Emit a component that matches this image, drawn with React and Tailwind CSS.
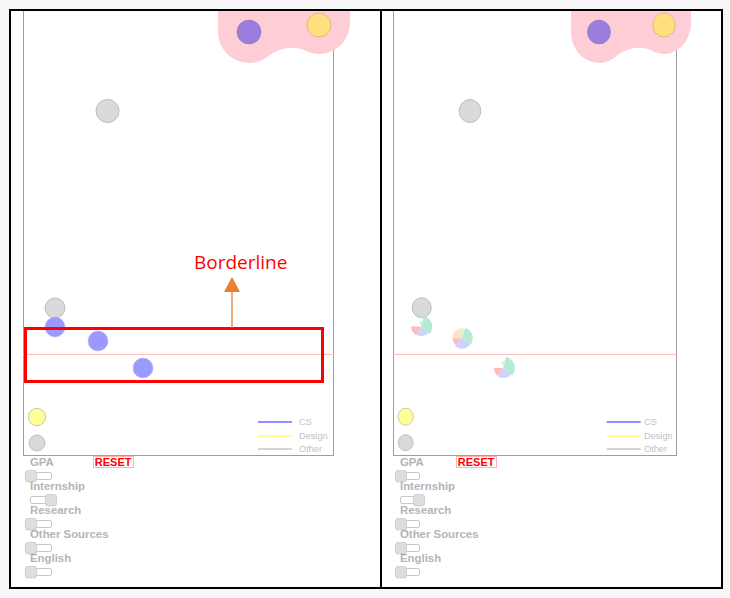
import React from "react";

const wedge = (cx, cy, r, a0, a1) => {
  const rad = (a) => (a * Math.PI) / 180;
  const x0 = cx + r * Math.cos(rad(a0));
  const y0 = cy + r * Math.sin(rad(a0));
  const x1 = cx + r * Math.cos(rad(a1));
  const y1 = cy + r * Math.sin(rad(a1));
  const large = a1 - a0 > 180 ? 1 : 0;
  return `M ${cx} ${cy} L ${x0} ${y0} A ${r} ${r} 0 ${large} 1 ${x1} ${y1} Z`;
};

const WEDGE_COLORS = {
  red: "#ffbcbc",
  blue: "#cdd3ff",
  green: "#b6ead2",
  peach: "#fde0c6",
  lime: "#e6f1cb",
};

const pies = [
  {
    cx: 28.3,
    cy: 315.7,
    parts: [
      ["lime", -112, -76, 5.5],
      ["green", -76, 42, 11],
      ["blue", 42, 122, 9.5],
      ["red", 122, 182, 10],
    ],
  },
  {
    cx: 68.7,
    cy: 327.3,
    parts: [
      ["peach", 180, 245, 9.5],
      ["lime", 245, 290, 10],
      ["green", -70, 32, 11],
      ["blue", 32, 130, 10.5],
      ["red", 130, 180, 9],
    ],
  },
  {
    cx: 110.3,
    cy: 357,
    parts: [
      ["lime", -110, -76, 7],
      ["green", -76, 40, 11.5],
      ["blue", 40, 125, 10],
      ["red", 125, 180, 9.5],
    ],
  },
];

function Legend({ x, tx }) {
  const rows = [
    ["#6b6bff", "CS", 411],
    ["#ffff70", "Design", 425],
    ["#c8c8c8", "Other", 438],
  ];
  return (
    <g>
      {rows.map(([c, label, y]) => (
        <g key={label}>
          <line x1={x} x2={x + 34} y1={y} y2={y} stroke={c} strokeWidth="1.5" />
          <text
            x={tx}
            y={y + 3.3}
            fontSize="9.2"
            fill="#c2c2c2"
            fontFamily="'Liberation Sans', Arial, sans-serif"
          >
            {label}
          </text>
        </g>
      ))}
    </g>
  );
}

function LeftPlot() {
  return (
    <svg width="311" height="446" className="absolute left-[-1px] top-0 overflow-visible">
      <path
        d="M 195 21 A 31 31 0 0 0 245.9 44.7 C 258 36 272 34 285.4 41.1 A 31 31 0 0 0 327 12 L 327 -40 L 195 -40 Z"
        fill="#ffcdd6"
      />
      <circle cx="226" cy="21" r="12" fill="#9b7de0" stroke="#8a7ab8" strokeWidth="0.6" />
      <circle cx="296" cy="14" r="12" fill="#ffe07c" stroke="#bba77a" strokeWidth="0.6" />
      <circle cx="84.5" cy="100" r="11.5" fill="#dadada" stroke="#bdbdbd" strokeWidth="1" />
      <line x1="0" x2="311" y1="343.5" y2="343.5" stroke="#ffbcbc" strokeWidth="1" />
      <circle cx="32" cy="297" r="10" fill="#dadada" stroke="#bdbdbd" strokeWidth="1" />
      <circle cx="32" cy="316" r="10" fill="#9999ff" stroke="#b8b8e0" strokeWidth="0.6" />
      <circle cx="75" cy="330" r="10" fill="#9999ff" stroke="#b8b8e0" strokeWidth="0.6" />
      <circle cx="120" cy="357" r="10" fill="#9999ff" stroke="#b8b8e0" strokeWidth="0.6" />
      <circle cx="14" cy="406" r="8.6" fill="#ffff99" stroke="#bdbd9a" strokeWidth="0.8" />
      <circle cx="14" cy="432" r="8" fill="#dadada" stroke="#b5b5b5" strokeWidth="0.8" />
      <Legend x={235} tx={276} />
    </svg>
  );
}

function RightPlot() {
  return (
    <svg width="284" height="446" className="absolute left-[-1px] top-0 overflow-visible">
      <path
        d="M 178 21 A 28 31 0 0 0 224 44.7 C 235 36 249 34 261.8 41.1 A 27 31 0 0 0 298 12 L 298 -40 L 178 -40 Z"
        fill="#ffcdd6"
      />
      <ellipse cx="206" cy="21" rx="11.5" ry="12" fill="#9b7de0" stroke="#8a7ab8" strokeWidth="0.6" />
      <ellipse cx="271" cy="14" rx="11.2" ry="12" fill="#ffe07c" stroke="#bba77a" strokeWidth="0.6" />
      <ellipse cx="77" cy="100" rx="10.8" ry="11.5" fill="#dadada" stroke="#bdbdbd" strokeWidth="1" />
      <line x1="0" x2="284" y1="343.5" y2="343.5" stroke="#ffbcbc" strokeWidth="1" />
      <ellipse cx="28.7" cy="296.7" rx="9.5" ry="10" fill="#dadada" stroke="#bdbdbd" strokeWidth="1" />
      {pies.map((p, i) => (
        <g key={i}>
          {p.parts.map(([c, a0, a1, r], j) => (
            <path key={j} d={wedge(p.cx, p.cy, r, a0, a1)} fill={WEDGE_COLORS[c]} />
          ))}
        </g>
      ))}
      <ellipse cx="12.7" cy="405.7" rx="7.6" ry="8.5" fill="#ffff99" stroke="#bdbd9a" strokeWidth="0.8" />
      <ellipse cx="12.7" cy="431.7" rx="7.4" ry="8" fill="#dadada" stroke="#b5b5b5" strokeWidth="0.8" />
      <Legend x={213.7} tx={251} />
    </svg>
  );
}

const FILTERS = [
  ["GPA", false],
  ["Internship", true],
  ["Research", false],
  ["Other Sources", false],
  ["English", false],
];

function Toggle({ on, track }) {
  return (
    <div className="relative h-[12px] mt-[2px]" style={{ width: track }}>
      <div className="absolute left-0 right-0 top-[2px] h-[8px] bg-white border border-[#c8c8c8] rounded-[2px]" />
      <div
        className={`absolute top-0 w-[12px] h-[12px] rounded-[3px] bg-[#dedede] border border-[#d0d0d0] shadow-[0_1px_1px_rgba(0,0,0,0.08)] ${
          on ? "right-[-5px]" : "left-[-5px]"
        }`}
      />
    </div>
  );
}

function Controls({ pad, resetAt, track }) {
  return (
    <div className="flex flex-col font-['Liberation_Sans',Arial,sans-serif]" style={{ paddingLeft: pad }}>
      {FILTERS.map(([label, on], i) => (
        <div key={label} className="h-[24px] flex flex-col">
          <div className="h-[12px] flex items-center">
            <span className="text-[11.4px] leading-[12px] font-bold text-[#b5b5b5]">{label}</span>
            {i === 0 && (
              <span
                className="text-[11px] leading-[10px] font-bold text-[#ff0000] border border-[#ffb0b0] px-[1px]"
                style={{ marginLeft: resetAt }}
              >
                RESET
              </span>
            )}
          </div>
          <Toggle on={on} track={track} />
        </div>
      ))}
    </div>
  );
}

export default function App() {
  return (
    <div className="w-[730px] h-[598px] bg-[#f7f7f7] pt-[9px] pl-[9px]">
      <div className="w-[714px] h-[580px] border-2 border-black bg-white flex">
        <div className="relative w-[371px] h-full overflow-hidden border-r-2 border-black">
          <div className="relative ml-[12px] w-[311px] h-[445px] border-x border-b border-[#9e9e9e]">
            <LeftPlot />
            <div className="absolute left-[0px] top-[316px] w-[300px] h-[56px] border-[3px] border-[#ff0000]" />
            <svg width="20" height="52" className="absolute left-[198px] top-[265px]">
              <line x1="10" x2="10" y1="14" y2="52" stroke="#ed7d31" strokeWidth="1.3" />
              <polygon points="10,1 2,16 18,16" fill="#ed7d31" />
            </svg>
            <div className="absolute left-[170px] top-[242px] text-[19px] leading-[19px] text-[#ff0000] font-['Open_Sans',sans-serif] whitespace-nowrap">
              Borderline
            </div>
          </div>
          <Controls pad={19} resetAt={39} track={22} />
        </div>
        <div className="relative w-[339px] h-full overflow-hidden">
          <div className="relative ml-[11px] w-[284px] h-[445px] border-x border-b border-[#9e9e9e]">
            <RightPlot />
          </div>
          <Controls pad={18} resetAt={32} track={20} />
        </div>
      </div>
    </div>
  );
}
